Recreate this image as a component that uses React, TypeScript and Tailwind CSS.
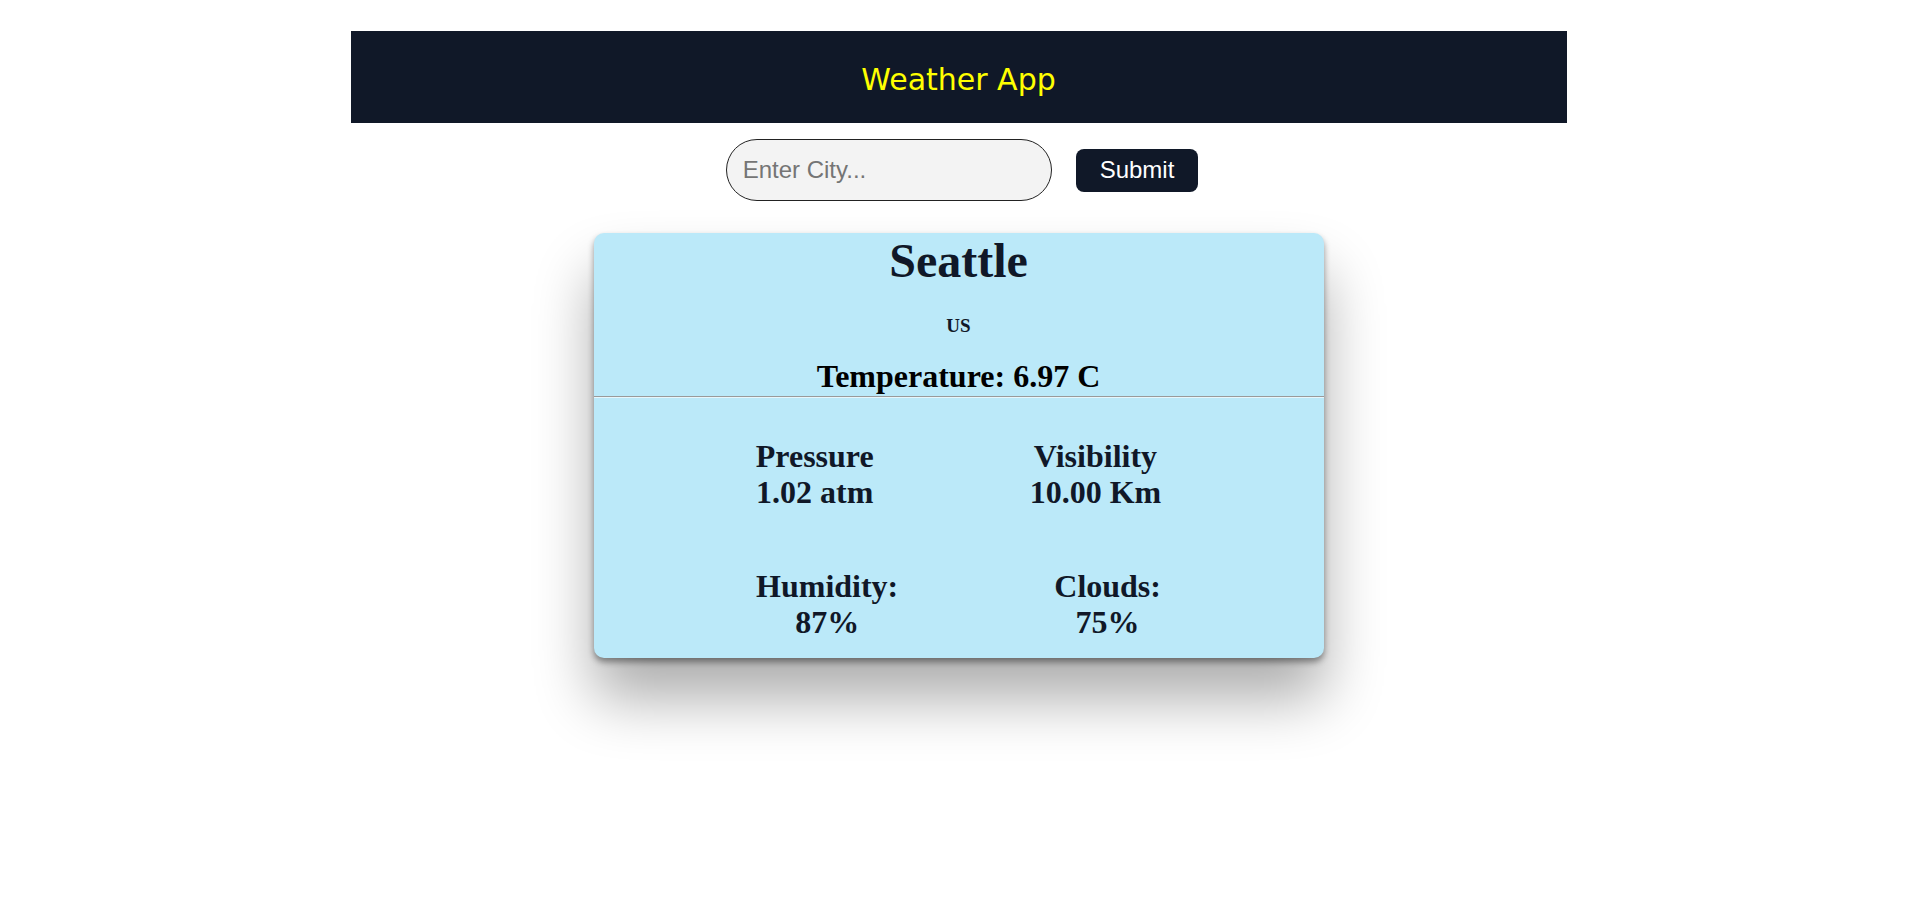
import React from "react";

const serif = "font-['Liberation_Serif','Times_New_Roman',serif]";

function Stat({ label, value }: { label: string; value: string }) {
  return (
    <div className="flex flex-col items-center text-[32px] leading-[36px] font-bold">
      <span>{label}</span>
      <span>{value}</span>
    </div>
  );
}

export default function App() {
  return (
    <div className="min-h-screen bg-white pt-[31px]">
      {/* Cabecera */}
      <header className="mx-auto w-[1216px] h-[92px] bg-[#101828] flex items-center justify-center">
        <h1 className="font-['Comic_Sans_MS','DejaVu_Sans',cursive] text-[30px] text-[#ffff00] pt-[4px]">
          Weather App
        </h1>
      </header>

      {/* Buscador */}
      <div className="flex items-center justify-center gap-6 mt-4 pl-[7px] font-['Liberation_Sans',Arial,sans-serif]">
        <input
          type="text"
          placeholder="Enter City..."
          className="w-[326px] h-[62px] rounded-full border border-[#222] bg-[#f3f3f3] px-4 text-[24px] text-black placeholder:text-[#757575] outline-none"
        />
        <button className="h-[43px] px-6 rounded-lg bg-[#101828] text-white text-[24px]">
          Submit
        </button>
      </div>

      {/* Tarjeta del clima */}
      <div
        className={`mx-auto mt-8 w-[730px] rounded-[10px] bg-[#bbe9f9] text-[#101828] text-center ${serif} shadow-[0_4px_6px_rgba(0,0,0,0.4),0_40px_60px_rgba(0,0,0,0.33)]`}
      >
        <h2 className="text-[48px] leading-[55px] font-bold">Seattle</h2>
        <h4 className="mt-[27px] text-[19px] leading-[22px] font-bold">US</h4>
        <h3 className="mt-[22px] text-[32px] leading-[35px] font-bold text-black">
          Temperature: 6.97 C
        </h3>
        <div className="mt-[2px] border-t border-b border-t-[#9a9a9a] border-b-[#e6f6fc]" />

        <div className="pt-10 pb-[18px] flex flex-col gap-[58px]">
          <div className="flex justify-center gap-[156px]">
            <Stat label="Pressure" value="1.02 atm" />
            <Stat label="Visibility" value="10.00 Km" />
          </div>
          <div className="flex justify-center gap-[156px]">
            <Stat label="Humidity:" value="87%" />
            <Stat label="Clouds:" value="75%" />
          </div>
        </div>
      </div>
    </div>
  );
}
